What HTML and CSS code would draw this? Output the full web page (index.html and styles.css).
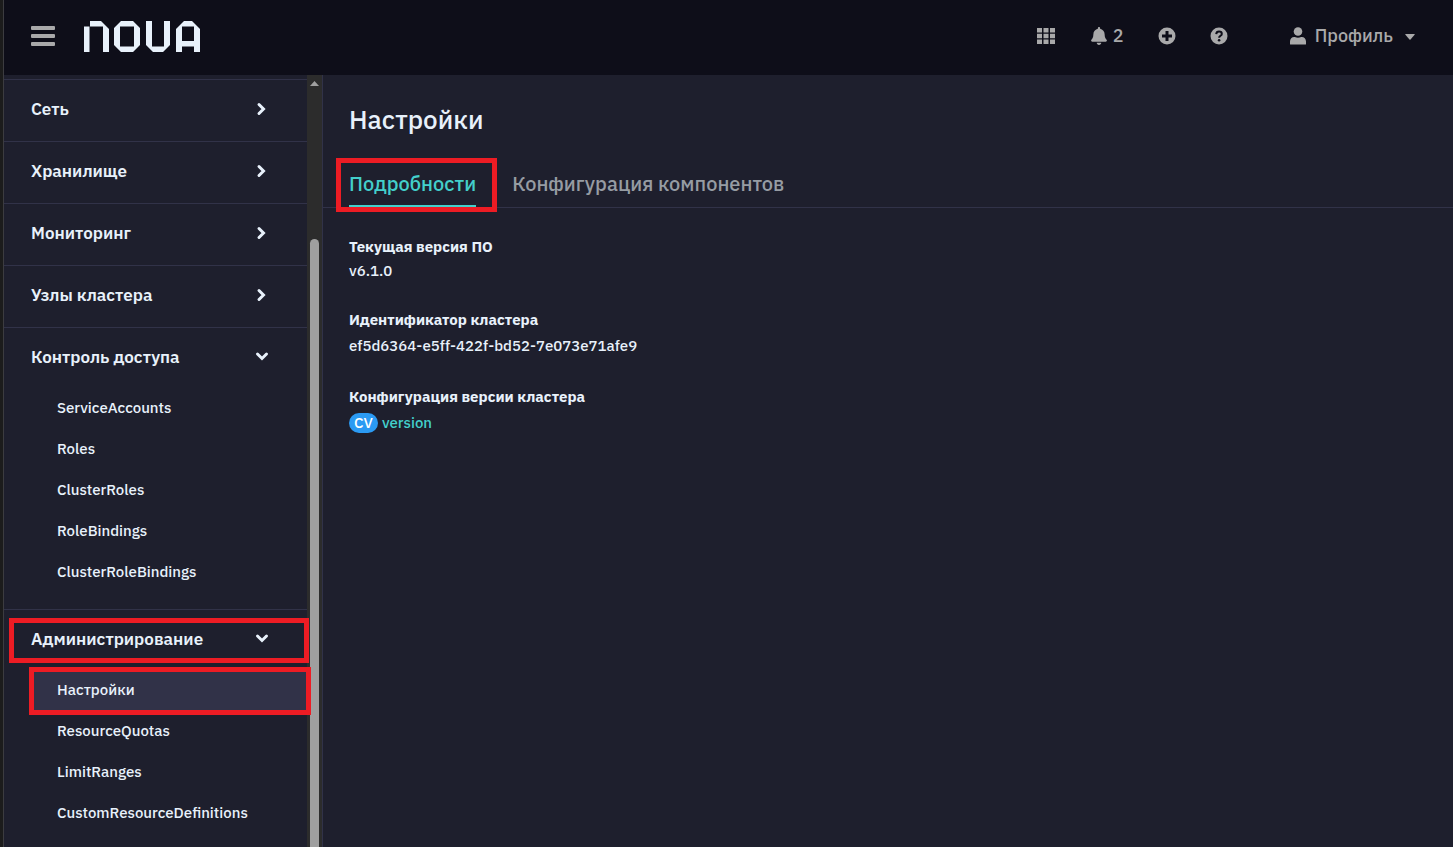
FILE: index.html
```html
<!DOCTYPE html>
<html lang="ru">

<head>
    <meta charset="UTF-8" />
    <meta name="viewport" content="width=device-width, initial-scale=1.0" />
    <title>Настройки</title>
    <link rel="stylesheet" href="styles.css">
</head>

<body>

    <header class="header">
        <button class="menu-button" type="button" aria-label="Меню">
            <svg width="24" height="20" viewBox="0 0 24 20">
                <rect width="24" height="4" rx="1" />
                <rect y="8" width="24" height="4" rx="1" />
                <rect y="16" width="24" height="4" rx="1" />
            </svg>
        </button>
        <a class="logo" href="#" aria-label="Nova">
            <svg width="118" height="33" viewBox="0 -2 118 33">
                <path d="M1 5.500h5.500V31H1zM7 0h11l8 8v23h-6V5.500H7z" />
                <path fill-rule="evenodd" d="M38 0h12l7 7v17l-7 7H38l-7-7V7zM37 5.500v20h14v-20z" />
                <path d="M63 0h6v25.500h12V0h6v24l-7 7H70l-7-7z" />
                <path fill-rule="evenodd" d="M93 31V8l8-8h8l8 8v23h-6v-5.500H99V31zM99 5.500V20h12V5.500z" />
            </svg>
        </a>
        <div class="tools">
            <button class="tool" type="button" aria-label="Приложения">
                <svg width="20" height="16" viewBox="0 0 20 16">
                    <path d="M0 0h5v4.500H0zM6.500 0h5v4.500h-5zM13 0h5v4.500h-5zM0 5.750h5v4.500H0zM6.500 5.750h5v4.500h-5zM13 5.750h5v4.500h-5zM0 11.500h5V16H0zM6.500 11.500h5V16h-5zM13 11.500h5V16h-5z" />
                </svg>
            </button>
            <button class="tool tool-bell" type="button" aria-label="Уведомления: 2">
                <svg width="16" height="18" viewBox="0 0 448 512">
                    <path d="M224 512c35.320 0 63.970-28.650 63.970-64H160.030c0 35.350 28.650 64 63.970 64zm215.390-149.710c-19.320-20.760-55.470-51.990-55.470-154.290 0-77.700-54.480-139.900-127.940-155.160V32c0-17.670-14.320-32-31.980-32s-31.980 14.330-31.980 32v20.840C118.560 68.100 64.080 130.300 64.080 208c0 102.300-36.150 133.530-55.470 154.290-6 6.450-8.660 14.160-8.610 21.710.11 16.400 12.980 32 32.100 32h383.800c19.120 0 32-15.600 32.100-32 .05-7.550-2.610-15.270-8.610-21.710z" />
                </svg>
                <span>2</span>
            </button>
            <button class="tool" type="button" aria-label="Создать">
                <svg width="18" height="18" viewBox="0 0 18 18">
                    <path fill-rule="evenodd" d="M9 .5a8.500 8.500 0 1 0 0 17a8.500 8.500 0 1 0 0-17zM7.500 4v3.500H4v3h3.500V14h3v-3.500H14v-3h-3.500V4z" />
                </svg>
            </button>
            <button class="tool" type="button" aria-label="Справка">
                <svg width="18" height="18" viewBox="0 0 18 18">
                    <circle cx="9" cy="9" r="8.500" />
                    <path class="mark" d="M6.200 7.100C6.400 5.300 7.600 4.600 9 4.600c1.700 0 2.800 1 2.800 2.300 0 1.900-2.700 1.800-2.700 3.900" />
                    <circle class="dot" cx="9.100" cy="13.300" r="1.300" />
                </svg>
            </button>
            <button class="tool tool-profile" type="button">
                <svg width="16" height="18" viewBox="0 0 16 18">
                    <circle cx="8" cy="4.500" r="4.300" />
                    <path d="M0 17v-2.500C0 12 1.800 10 4.200 10h.6a7 7 0 0 0 6.400 0h.6C14.200 10 16 12 16 14.500V17q0 .5-.5.5H.5Q0 17.500 0 17z" />
                </svg>
                <span>Профиль</span>
                <svg class="caret" width="10" height="6" viewBox="0 0 10 6">
                    <path d="M.8 0h8.400q1 0 .4.800L5.500 5.600q-.5.500-1 0L.4.800Q-.2 0 .8 0z" />
                </svg>
            </button>
        </div>
    </header>

    <div class="page">
        <nav class="sidebar">
            <section class="group">
                <button class="group-title" type="button">Сеть
                    <svg class="chevron" width="14" height="14" viewBox="0 0 14 14"><path d="M4 2.500L8.500 7L4 11.500" /></svg>
                </button>
            </section>
            <section class="group">
                <button class="group-title" type="button">Хранилище
                    <svg class="chevron" width="14" height="14" viewBox="0 0 14 14"><path d="M4 2.500L8.500 7L4 11.500" /></svg>
                </button>
            </section>
            <section class="group">
                <button class="group-title" type="button">Мониторинг
                    <svg class="chevron" width="14" height="14" viewBox="0 0 14 14"><path d="M4 2.500L8.500 7L4 11.500" /></svg>
                </button>
            </section>
            <section class="group">
                <button class="group-title" type="button">Узлы кластера
                    <svg class="chevron" width="14" height="14" viewBox="0 0 14 14"><path d="M4 2.500L8.500 7L4 11.500" /></svg>
                </button>
            </section>
            <section class="group">
                <button class="group-title" type="button" aria-expanded="true">Контроль доступа
                    <svg class="chevron" width="14" height="14" viewBox="0 0 14 14"><path d="M2.500 4L7 8.500L11.500 4" /></svg>
                </button>
                <ul class="links">
                    <li><a href="#">ServiceAccounts</a></li>
                    <li><a href="#">Roles</a></li>
                    <li><a href="#">ClusterRoles</a></li>
                    <li><a href="#">RoleBindings</a></li>
                    <li><a href="#">ClusterRoleBindings</a></li>
                </ul>
            </section>
            <section class="group">
                <button class="group-title marked" type="button" aria-expanded="true">Администрирование
                    <svg class="chevron" width="14" height="14" viewBox="0 0 14 14"><path d="M2.500 4L7 8.500L11.500 4" /></svg>
                </button>
                <ul class="links">
                    <li><a class="current marked" href="#" aria-current="page">Настройки</a></li>
                    <li><a href="#">ResourceQuotas</a></li>
                    <li><a href="#">LimitRanges</a></li>
                    <li><a href="#">CustomResourceDefinitions</a></li>
                </ul>
            </section>
        </nav>
        <div class="scrollbar">
            <svg width="9" height="5" viewBox="0 0 9 5"><path d="M4.500 0L9 5H0z" /></svg>
            <div class="thumb"></div>
        </div>

        <main class="content">
            <h1>Настройки</h1>
            <div class="tabs">
                <a class="tab active marked" href="#">Подробности</a>
                <a class="tab" href="#">Конфигурация компонентов</a>
            </div>
            <dl class="details">
                <dt>Текущая версия ПО</dt>
                <dd class="version">v6.1.0</dd>
                <dt>Идентификатор кластера</dt>
                <dd>ef5d6364-e5ff-422f-bd52-7e073e71afe9</dd>
                <dt>Конфигурация версии кластера</dt>
                <dd><span class="badge">CV</span><a href="#">version</a></dd>
            </dl>
        </main>
    </div>

</body>

</html>
```

FILE: styles.css
```css
:root {
    --base: #1e1f2d;
    --header: #0e0e19;
    --line: #313248;
    --text: #e8f1fb;
    --muted: #a9a9aa;
    --tab: #969ca3;
    --accent: #43cfcb;
    --mark: #ed1c24;
}

* {
    box-sizing: border-box;
}

body {
    display: flex;
    flex-direction: column;
    height: 100vh;
    margin: 0;
    overflow: hidden;
    border-left: 3px solid #1c1c1c;
    font-family: "IBM Plex Sans", "Noto Sans", sans-serif;
    font-size: 15px;
    font-weight: 500;
    color: var(--text);
    background-color: var(--base);
}

button {
    padding: 0;
    border: none;
    font: inherit;
    color: inherit;
    background: none;
}

a {
    color: inherit;
    text-decoration: none;
}

svg {
    display: block;
    flex: none;
    fill: currentColor;
}

/* Header */
.header {
    display: flex;
    flex: none;
    align-items: center;
    height: 75px;
    padding: 0 38px 4px 27px;
    border-left: 1px solid #3c3c40;
    color: var(--muted);
    background-color: var(--header);
}

.logo {
    margin-left: 28px;
    color: var(--text);
}

.tools {
    display: flex;
    align-items: center;
    gap: 34px;
    margin-left: auto;
    font-size: 18px;
}

.tool {
    display: flex;
    align-items: center;
    gap: 6px;
}

.tool .mark {
    fill: none;
    stroke: var(--header);
    stroke-width: 2px;
}

.tool .dot {
    fill: var(--header);
}

.tool-profile {
    gap: 9px;
    margin-left: 28px;
}

.caret {
    margin: 2px 0 0 3px;
}

/* Sidebar */
.page {
    display: flex;
    flex: 1;
    min-height: 0;
    border-left: 1px solid #3c3c40;
}

.sidebar {
    position: relative;
    z-index: 1;
    flex: none;
    width: 303px;
    padding-top: 4px;
}

.group {
    border-top: 1px solid var(--line);
}

.group-title {
    display: flex;
    align-items: center;
    justify-content: space-between;
    width: 100%;
    height: 61px;
    padding: 0 38px 4px 27px;
    font-size: 17px;
    font-weight: 600;
}

.chevron {
    fill: none;
    stroke: currentColor;
    stroke-width: 3px;
    stroke-linecap: round;
}

.links {
    margin: 0;
    padding: 0 0 15px 26px;
    list-style: none;
}

.links a {
    display: flex;
    align-items: center;
    height: 41px;
    padding: 0 0 4px 27px;
}

.links .current {
    background-color: var(--line);
}

.scrollbar {
    display: flex;
    flex: none;
    flex-direction: column;
    align-items: center;
    width: 15px;
    padding-top: 6px;
    color: #9f9f9f;
    background-color: #2c2c2c;
}

.thumb {
    flex: 1;
    width: 9px;
    margin-top: 153px;
    border-radius: 5px 5px 0 0;
    background-color: #9f9f9f;
}

/* Content */
.content {
    flex: 1;
    min-width: 0;
    border-left: 1px solid var(--line);
}

.content h1 {
    margin: 0;
    padding: 28px 26px 0;
    font-size: 26px;
    font-weight: 500;
    line-height: 32px;
}

.tabs {
    display: flex;
    gap: 36px;
    padding: 26px 26px 0;
    border-bottom: 1px solid var(--line);
    font-size: 20px;
    line-height: 24px;
    color: var(--tab);
}

.tab {
    padding: 11px 0 9px;
    border-bottom: 2px solid transparent;
}

.tab.active {
    border-color: var(--accent);
    color: var(--accent);
}

.details {
    margin: 0;
    padding: 27px 26px;
    line-height: 24px;
}

.details dt {
    font-weight: 700;
}

.details dd {
    display: flex;
    align-items: center;
    gap: 4px;
    height: 27px;
    margin: 0 0 26px;
}

.details .version {
    height: 23px;
}

.details a {
    color: var(--accent);
}

.badge {
    padding: 0 5px;
    border-radius: 10px;
    line-height: 20px;
    color: #ffffff;
    background-color: #2b9af3;
}

/* Red frames over the steps to follow */
.marked {
    position: relative;
}

.marked::after {
    content: "";
    position: absolute;
    border: 5px solid var(--mark);
}

.group-title.marked::after {
    inset: 8px -2px 8px 5px;
}

.links .marked::after {
    inset: -4px -4px -3px -1px;
}

.tab.marked::after {
    inset: -3px -21px -7px -13px;
}
```
